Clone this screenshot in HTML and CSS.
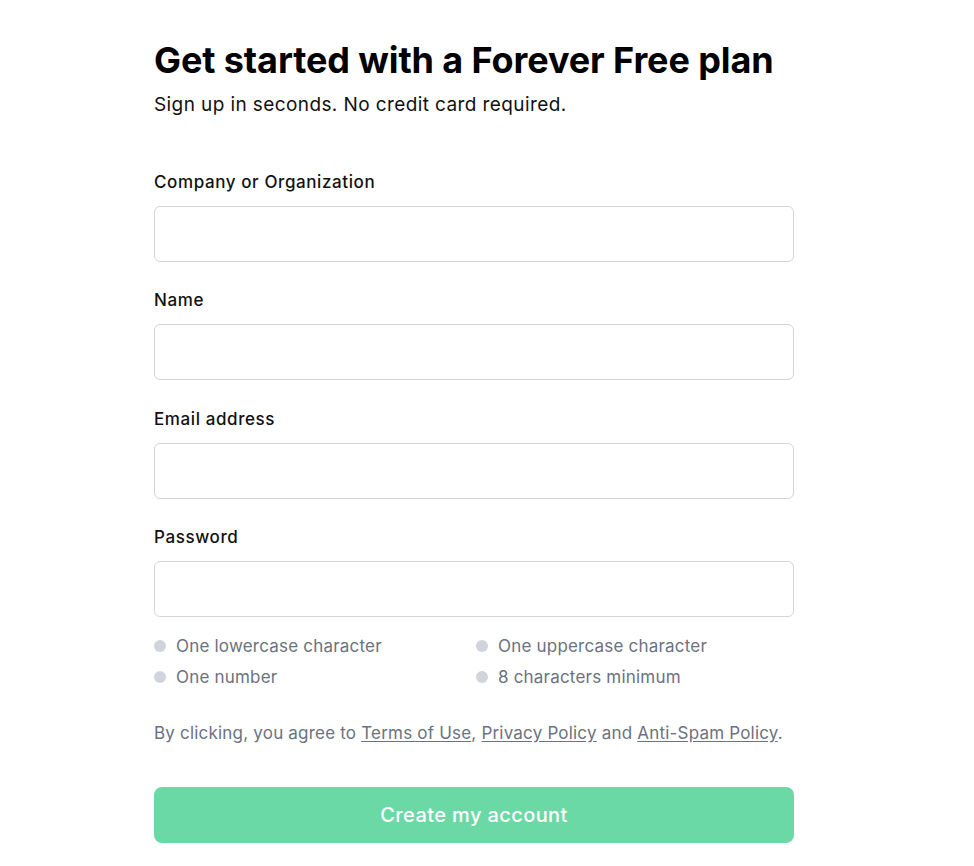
FILE: index.html
```html
<!DOCTYPE html>
<html lang="en">
<head>
<meta charset="utf-8">
<title>Sign up</title>
<link rel="stylesheet" href="styles.css">
</head>
<body>
<main class="signup">
  <header class="intro">
    <h1 class="title">Get started with a Forever Free plan</h1>
    <p class="subtitle">Sign up in seconds. No credit card required.</p>
  </header>
  <form class="form">
    <div class="field">
      <label class="label" for="company">Company or Organization</label>
      <input class="input" id="company" type="text">
    </div>
    <div class="field">
      <label class="label" for="name">Name</label>
      <input class="input" id="name" type="text">
    </div>
    <div class="field">
      <label class="label" for="email">Email address</label>
      <input class="input" id="email" type="email">
    </div>
    <div class="field">
      <label class="label" for="password">Password</label>
      <input class="input" id="password" type="password">
      <ul class="rules">
        <li class="rule">One lowercase character</li>
        <li class="rule">One uppercase character</li>
        <li class="rule">One number</li>
        <li class="rule">8 characters minimum</li>
      </ul>
    </div>
    <p class="terms">By clicking, you agree to <a href="#">Terms of Use</a>, <a href="#">Privacy Policy</a> and <a href="#">Anti-Spam Policy</a>.</p>
    <button class="submit" type="button">Create my account</button>
  </form>
</main>
</body>
</html>
```
FILE: styles.css
```css
* { box-sizing: border-box; }
html, body { margin: 0; padding: 0; background: #fff; }
body {
  font-family: Inter, "Noto Sans", sans-serif;
  color: #111;
}
.signup {
  width: 640px;
  margin-left: 154px;
  padding-top: 36px;
}
.title {
  margin: 0;
  font-size: 36px;
  line-height: 48px;
  font-weight: 700;
  letter-spacing: -0.1px;
  color: #000;
}
.subtitle {
  margin: 7px 0 0;
  font-size: 19px;
  line-height: 28px;
  letter-spacing: 0.4px;
  color: #111;
}
.form {
  margin-top: 51px;
  display: flex;
  flex-direction: column;
}
.field {
  display: flex;
  flex-direction: column;
  margin-bottom: 26.34px;
}
.label {
  font-size: 17px;
  line-height: 24px;
  font-weight: 500;
  letter-spacing: 0.6px;
  color: #111;
  margin-bottom: 12px;
}
.input {
  height: 56px;
  border: 1px solid #d4d5db;
  border-radius: 6px;
  font: inherit;
  padding: 0 16px;
  background: #fff;
}
.rules {
  list-style: none;
  margin: 17px 0 0;
  padding: 0;
  display: grid;
  grid-template-columns: 1fr 1fr;
  column-gap: 4px;
  row-gap: 7px;
}
.rule {
  display: flex;
  align-items: center;
  gap: 10px;
  font-size: 17px;
  line-height: 24px;
  letter-spacing: 0.2px;
  color: #6b7280;
}
.rule::before {
  content: "";
  width: 12px;
  height: 12px;
  border-radius: 50%;
  background: #d1d5db;
  flex: none;
}
.terms {
  margin: 6px 0 0;
  font-size: 17px;
  line-height: 24px;
  letter-spacing: 0.2px;
  color: #6b7280;
}
.terms a {
  color: #6b7280;
  text-decoration: underline;
  text-underline-offset: 2px;
}
.submit {
  margin-top: 42px;
  height: 56px;
  border: 0;
  border-radius: 8px;
  background: #6bd9a6;
  color: #fff;
  font-family: inherit;
  font-size: 20px;
  font-weight: 500;
  letter-spacing: 0.4px;
}
```
